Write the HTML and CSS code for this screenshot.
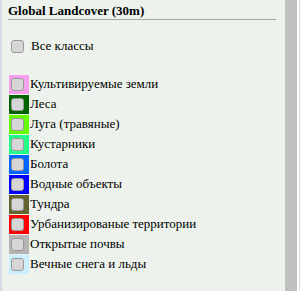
FILE: index.html
```html
<!DOCTYPE html>
<html lang="ru">
<head>
    <meta charset="UTF-8">
    <title>Global Landcover (30m)</title>
    <link rel="stylesheet" href="styles.css">
</head>
<body>
    <div class="frame">
        <div class="edge"></div>
        <div class="panel">
            <div class="title">Global Landcover (30m)</div>
            <label class="all"><input type="checkbox"><span class="label">Все классы</span></label>
            <div class="legend">
                <div class="item"><span class="swatch crop"><input type="checkbox"></span><span class="label">Культивируемые земли</span></div>
                <div class="item"><span class="swatch forest"><input type="checkbox"></span><span class="label">Леса</span></div>
                <div class="item"><span class="swatch grass"><input type="checkbox"></span><span class="label">Луга (травяные)</span></div>
                <div class="item"><span class="swatch shrub"><input type="checkbox"></span><span class="label">Кустарники</span></div>
                <div class="item"><span class="swatch wetland"><input type="checkbox"></span><span class="label">Болота</span></div>
                <div class="item"><span class="swatch water"><input type="checkbox"></span><span class="label">Водные объекты</span></div>
                <div class="item"><span class="swatch tundra"><input type="checkbox"></span><span class="label">Тундра</span></div>
                <div class="item"><span class="swatch urban"><input type="checkbox"></span><span class="label">Урбанизированые территории</span></div>
                <div class="item"><span class="swatch bare"><input type="checkbox"></span><span class="label">Открытые почвы</span></div>
                <div class="item"><span class="swatch snow"><input type="checkbox"></span><span class="label">Вечные снега и льды</span></div>
            </div>
        </div>
        <div class="scrollbar"></div>
        <div class="gap"></div>
        <div class="edge right"></div>
    </div>
</body>
</html>
```

FILE: styles.css
```css
body {
    margin: 0;
    font-family: "Times New Roman", "Liberation Serif", serif;
    font-size: 13px;
    color: #000;
    background: #edf3ec;
}
.frame {
    display: flex;
    height: 291px;
}
.edge {
    width: 2px;
    background: #d9d9e6;
}
.edge.right {
    width: 1px;
}
.panel {
    flex: 1;
    padding: 3px 9px 0 6px;
}
.scrollbar {
    width: 12px;
    background: #c0c0c0;
}
.gap {
    width: 2px;
    background: #fff;
}
.title {
    font-family: "Times New Roman", "Liberation Serif", serif;
    font-size: 13px;
    font-weight: bold;
    line-height: 15px;
    padding-bottom: 1px;
    border-bottom: 1px solid #a3aaa2;
}
.label {
    font-family: "Times New Roman", "Liberation Serif", serif;
    font-size: 13px;
}
input[type="checkbox"] {
    -webkit-appearance: none;
    appearance: none;
    width: 13px;
    height: 13px;
    margin: 0;
    border: 1px solid #9a9a9a;
    border-radius: 3px;
    background: #d6d6d6;
    box-sizing: border-box;
    flex: none;
}
.all {
    display: flex;
    align-items: center;
    gap: 7px;
    margin: 19px 0 0 3px;
    height: 14px;
}
.legend {
    margin: 21px 0 0 1px;
}
.item {
    display: flex;
    align-items: center;
    height: 20px;
    white-space: nowrap;
}
.swatch {
    width: 20px;
    height: 19px;
    margin-right: 1px;
    display: flex;
    align-items: center;
    padding-left: 2px;
    box-sizing: border-box;
}
.crop { background: #f8a0f0; }
.forest { background: #006400; }
.grass { background: #66ff00; }
.shrub { background: #22ff88; }
.wetland { background: #0066ff; }
.water { background: #0000ff; }
.tundra { background: #64642e; }
.urban { background: #ff0000; }
.bare { background: #b4b4b4; }
.snow { background: #c8f0ff; }
```
